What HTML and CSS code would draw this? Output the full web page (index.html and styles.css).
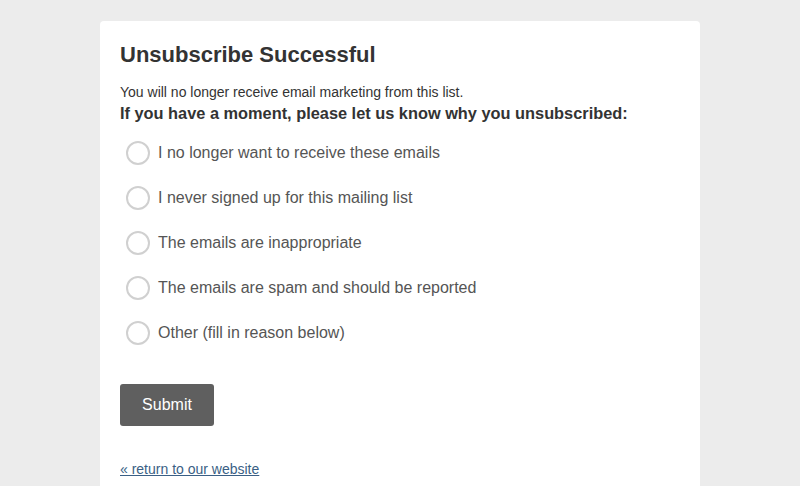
FILE: index.html
```html
<!DOCTYPE html>
<html>
<head>
<meta charset="utf-8">
<link rel="stylesheet" href="styles.css">
</head>
<body>
<div class="card">
  <h1 class="title">Unsubscribe Successful</h1>
  <p class="intro">You will no longer receive email marketing from this list.</p>
  <p class="ask">If you have a moment, please let us know why you unsubscribed:</p>
  <form class="form">
    <ul class="options">
      <li class="option"><span class="radio"></span><span class="label">I no longer want to receive these emails</span></li>
      <li class="option"><span class="radio"></span><span class="label">I never signed up for this mailing list</span></li>
      <li class="option"><span class="radio"></span><span class="label">The emails are inappropriate</span></li>
      <li class="option"><span class="radio"></span><span class="label">The emails are spam and should be reported</span></li>
      <li class="option"><span class="radio"></span><span class="label">Other (fill in reason below)</span></li>
    </ul>
    <button type="button" class="submit">Submit</button>
  </form>
  <a class="back" href="#">« return to our website</a>
</div>
</body>
</html>
```
FILE: styles.css
```css
html, body {
  margin: 0;
  padding: 0;
  background: #ececec;
  font-family: "Liberation Sans", Arial, sans-serif;
  color: #333;
}
body {
  padding-top: 21px;
}
.card {
  width: 600px;
  margin: 0 auto;
  box-sizing: border-box;
  background: #fff;
  border-radius: 4px;
  padding: 20px 20px 20px;
  min-height: 480px;
}
.title {
  margin: 0;
  font-size: 22px;
  font-weight: bold;
  line-height: 28px;
  color: #333;
}
.intro {
  margin: 14px 0 0;
  font-size: 14px;
  line-height: 18px;
}
.ask {
  margin: 0;
  font-size: 16.35px;
  font-weight: bold;
  line-height: 24px;
}
.form {
  margin: 0;
}
.options {
  list-style: none;
  margin: 16px 0 0;
  padding: 0 0 0 6px;
  display: flex;
  flex-direction: column;
  gap: 21px;
}
.option {
  display: flex;
  align-items: center;
  gap: 8px;
  height: 24px;
}
.radio {
  width: 20px;
  height: 20px;
  border: 2px solid #d0d0d0;
  border-radius: 50%;
  background: #fff;
  flex: none;
}
.label {
  font-size: 16px;
  color: #555;
}
.submit {
  display: block;
  margin-top: 39px;
  width: 94px;
  height: 42px;
  border: none;
  border-radius: 3px;
  background: #5f5f5f;
  color: #fff;
  font-family: "Liberation Sans", Arial, sans-serif;
  font-size: 16px;
  padding: 0;
}
.back {
  display: inline-block;
  margin-top: 35px;
  font-size: 14px;
  color: #3a5f85;
  text-decoration: underline;
}
```
